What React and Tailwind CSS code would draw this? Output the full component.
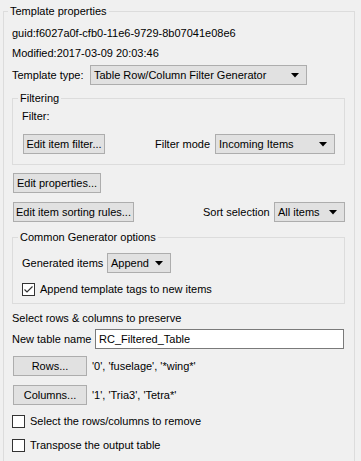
import React from 'react';

const Arrow = () => (
  <svg width="8" height="5" viewBox="0 0 8 5" className="shrink-0">
    <path d="M0 0 H8 L4 4.5 Z" fill="#000" />
  </svg>
);

const Select = ({ value, className }) => (
  <div className={`h-[20px] shrink-0 bg-[#e1e1e1] border border-[#adadad] flex items-center justify-between pl-[3px] pr-[7px] ${className}`}>
    <span className="whitespace-nowrap">{value}</span>
    <Arrow />
  </div>
);

const Button = ({ children, className }) => (
  <div className={`h-[20px] shrink-0 bg-[#e1e1e1] border border-[#adadad] flex items-center justify-center whitespace-nowrap ${className}`}>
    {children}
  </div>
);

const Check = ({ checked }) => (
  <div className="w-[13px] h-[13px] bg-white border border-[#333333] flex items-center justify-center shrink-0">
    {checked && (
      <svg width="11" height="11" viewBox="0 0 11 11">
        <path d="M1.5 5.5 L4 8 L9.5 2.5" stroke="#333" strokeWidth="1.2" fill="none" />
      </svg>
    )}
  </div>
);

const Label = ({ className, children }) => (
  <span className={`whitespace-nowrap shrink-0 ${className}`}>{children}</span>
);

const Group = ({ title, className, children }) => (
  <fieldset className={`border border-[#dcdcdc] ${className}`}>
    <legend className="ml-[5px] px-[2px] leading-[16px]">{title}</legend>
    {children}
  </fieldset>
);

export default function App() {
  return (
    <div className="w-[361px] h-[461px] bg-[#f0f0f0] overflow-hidden text-[11px] text-black font-['Liberation_Sans',sans-serif] leading-[16px]">
      <fieldset className="border border-[#dcdcdc] ml-[3px] mt-[3px] w-[351px] h-[470px]">
        <legend className="ml-[4px] px-[2px] leading-[16px]">Template properties</legend>
        <div className="pl-[8px] pr-[9px]">
          <div className="h-[20px] mt-[4px] flex items-center whitespace-nowrap">guid:f6027a0f-cfb0-11e6-9729-8b07041e08e6</div>
          <div className="h-[20px] flex items-center whitespace-nowrap">Modified:2017-03-09 20:03:46</div>
          <div className="flex items-center mt-[2px]">
            <Label className="w-[78px]">Template type:</Label>
            <Select value="Table Row/Column Filter Generator" className="w-[217px]" />
          </div>

          <Group title="Filtering" className="mt-[5px]">
            <div className="pl-[9px] pr-[8px] pb-[10px]">
              <div className="mt-[2px]">Filter:</div>
              <div className="flex items-center mt-[10px]">
                <Button className="ml-[1px] w-[82px]">Edit item filter...</Button>
                <Label className="ml-[50px] w-[60px]">Filter mode</Label>
                <Select value="Incoming Items" className="w-[120px]" />
              </div>
            </div>
          </Group>

          <Button className="mt-[8px] ml-[1px] w-[88px]">Edit properties...</Button>
          <div className="flex items-center mt-[9px]">
            <Button className="ml-[1px] w-[121px]">Edit item sorting rules...</Button>
            <Label className="ml-[69px] w-[71px]">Sort selection</Label>
            <Select value="All items" className="w-[71px]" />
          </div>

          <Group title="Common Generator options" className="mt-[7px]">
            <div className="pl-[9px] pr-[8px] pb-[6px]">
              <div className="flex items-center mt-[8px]">
                <Label className="w-[85px]">Generated items</Label>
                <Select value="Append" className="w-[64px]" />
              </div>
              <div className="flex items-center mt-[8px]">
                <Check checked />
                <Label className="ml-[5px]">Append template tags to new items</Label>
              </div>
            </div>
          </Group>

          <div className="mt-[6px] whitespace-nowrap">Select rows &amp; columns to preserve</div>
          <div className="flex items-center mt-[3px]">
            <Label className="w-[83px]">New table name</Label>
            <div className="h-[20px] w-[249px] shrink-0 bg-white border border-[#7a7a7a] flex items-center pl-[3px]">RC_Filtered_Table</div>
          </div>
          <div className="flex items-center mt-[7px]">
            <Button className="ml-[1px] w-[74px]">Rows...</Button>
            <Label className="ml-[5px]">'0', 'fuselage', '*wing*'</Label>
          </div>
          <div className="flex items-center mt-[9px]">
            <Button className="ml-[1px] w-[74px]">Columns...</Button>
            <Label className="ml-[5px]">'1', 'Tria3', 'Tetra*'</Label>
          </div>
          <div className="flex items-center mt-[8px]">
            <Check />
            <Label className="ml-[5px]">Select the rows/columns to remove</Label>
          </div>
          <div className="flex items-center mt-[8px]">
            <Check />
            <Label className="ml-[5px]">Transpose the output table</Label>
          </div>
        </div>
      </fieldset>
    </div>
  );
}
